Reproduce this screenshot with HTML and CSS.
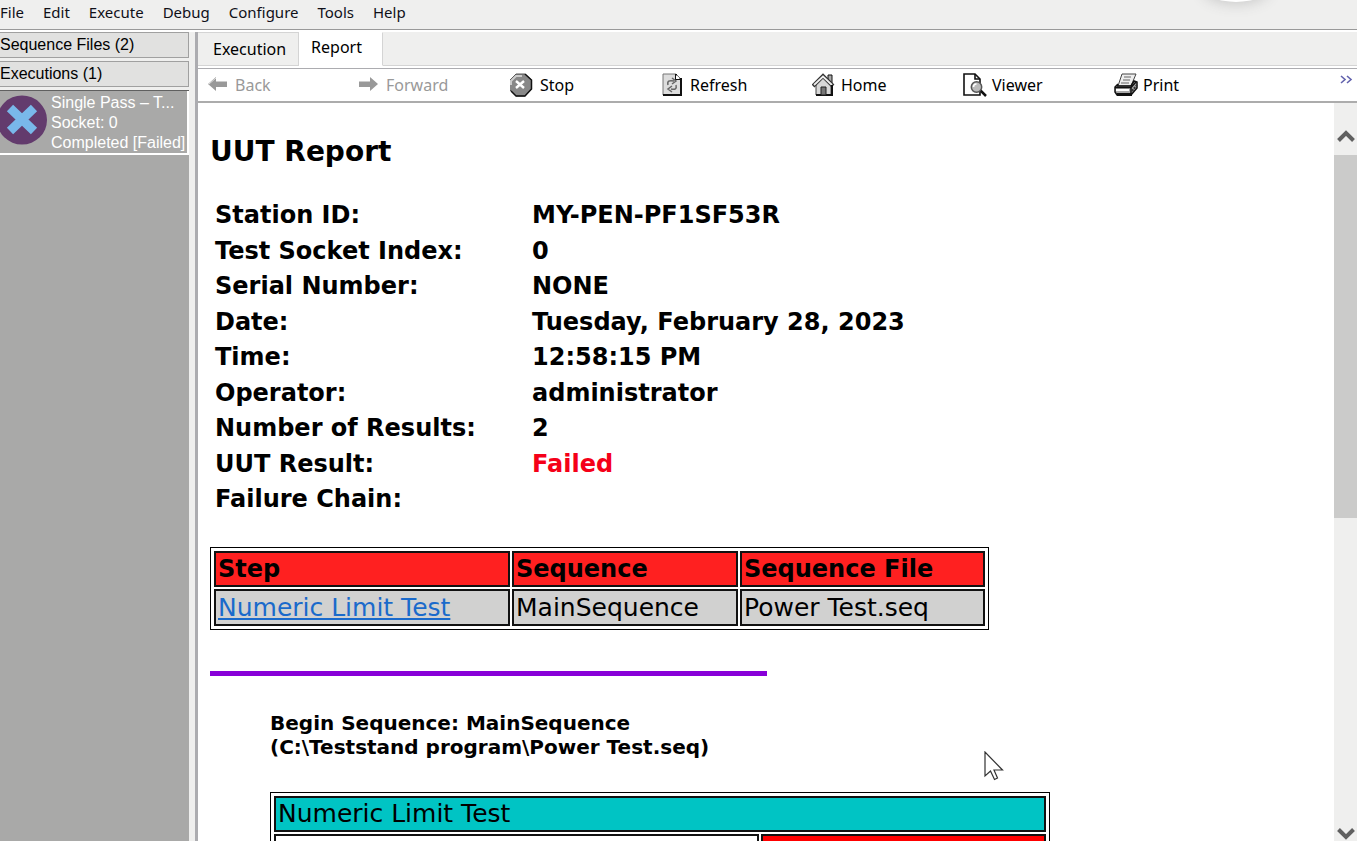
FILE: index.html
```html
<!DOCTYPE html>
<html lang="en">
<head>
<meta charset="utf-8">
<title>UUT Report</title>
<link rel="stylesheet" href="styles.css">
</head>
<body>
<div class="app">
  <header class="menubar">
    <button>File</button><button>Edit</button><button>Execute</button><button>Debug</button><button>Configure</button><button>Tools</button><button>Help</button>
    <span class="bubble"></span>
  </header>
  <div class="workspace">
    <aside class="sidebar">
      <button class="pane-title">Sequence Files (2)</button>
      <button class="pane-title">Executions (1)</button>
      <div class="runs">
        <button class="run">
          <svg width="47" height="50" viewBox="0 0 47 50"><ellipse cx="22" cy="25" rx="25" ry="24.500" fill="#633b6d"/><path d="M10 13 L34 36 M34 13 L10 36" stroke="#79b8ea" stroke-width="9"/></svg>
          <span class="run-text"><span>Single Pass – T...</span><span>Socket: 0</span><span>Completed [Failed]</span></span>
        </button>
      </div>
    </aside>
    <main class="main">
      <nav class="tabs">
        <button class="tab">Execution</button>
        <button class="tab active">Report</button>
        <span class="tab-rest"></span>
      </nav>
      <div class="toolbar">
        <button class="tool" disabled><svg width="22" height="24" viewBox="0 0 22 24"><path d="M0 11 L8 4 V8.500 H19 V14 H8 V18 Z" fill="#999"/><path d="M1 11 L8 5" stroke="#ddd"/></svg>Back</button>
        <button class="tool" disabled><svg width="22" height="24" viewBox="0 0 22 24"><path d="M19 11 L11 4 V8.500 H0 V14 H11 V18 Z" fill="#999"/></svg>Forward</button>
        <button class="tool"><svg width="25" height="24" viewBox="2 0 25 24"><path d="M8 1 H17 L23.500 7 V16 L17 23 H8 L1 16 V8 Z" fill="#888" stroke="#555"/><path d="M17 1 L23.500 7 V16 L17 23 H8 L3 18" fill="none" stroke="#111" stroke-width="1.500"/><path d="M3 12 V8 L8 3 H14" fill="none" stroke="#ccc" stroke-width="2"/><path d="M8 8 L16 15 M16 8 L8 15" stroke="#fff" stroke-width="2.400"/></svg>Stop</button>
        <button class="tool"><svg width="24" height="24" viewBox="0 0 24 24"><path d="M2 1 H15 L20 6 V22 H2 Z" fill="#ddd" stroke="#777"/><path d="M15 1 V6 H20 V22 H2" fill="none" stroke="#111" stroke-width="2"/><path d="M15 2 V6 H19 Z" fill="#fff"/><path d="M7 12 C6 8 8 7 13 8 M11 5 L15 8 L11 11 M15 12 C16 16 14 17 10 16 M11 13 L7 16 L11 19" fill="none" stroke="#666" stroke-width="1.500"/></svg>Refresh</button>
        <button class="tool"><svg width="24" height="24" viewBox="0 0 24 24"><path d="M4 12 L12 4 L19 12 V22 H4 Z" fill="#d8d8d8" stroke="#444"/><path d="M16 2 H20 V10 L16 6 Z" fill="#aaa" stroke="#111"/><path d="M1 13 L11 3 L21 13" fill="none" stroke="#333" stroke-width="4"/><path d="M2 12 L11 3.500 L20 12" fill="none" stroke="#eee" stroke-width="1.800"/><path d="M4 22 H20 V12" fill="none" stroke="#111" stroke-width="2"/><path d="M9 14 H14 V22 H9 Z" fill="#777" stroke="#222"/></svg>Home</button>
        <button class="tool"><svg width="24" height="24" viewBox="2 0 24 24"><path d="M3 1 H14 L19 6 V22 H3 Z" fill="#fff" stroke="#111" stroke-width="1.600"/><path d="M14 1 V6 H19" fill="none" stroke="#111" stroke-width="1.600"/><path d="M18 16 L25 23" stroke="#111" stroke-width="2.500"/><circle cx="15.500" cy="14" r="5.200" fill="#bbb" stroke="#555" stroke-width="1.500"/><path d="M12.500 14 Q12.500 11 15.500 11" fill="none" stroke="#fff" stroke-width="1.500"/></svg>Viewer</button>
        <button class="tool"><svg width="24" height="24" viewBox="1 0 24 24"><path d="M9 1 H23 L18 13 H5 Z" fill="#eee" stroke="#444"/><path d="M11 4 H18 M10 7 H17 M8 10 H16" stroke="#666"/><path d="M5 11 L2 14 V19 L4 22 H18 L24 15 V9 L21 8 L18 13 H4" fill="#aaa" stroke="#111" stroke-width="1.500"/><path d="M2 14.500 H18 L23 9 M18 15 V21" fill="none" stroke="#111" stroke-width="1.500"/><path d="M3 17 H16" stroke="#fff" stroke-width="2"/><path d="M4 21.500 H19" stroke="#111" stroke-width="3"/><path d="M19 18 L24 12" stroke="#333" stroke-width="2" stroke-dasharray="2 1"/></svg>Print</button>
        <button class="more" aria-label="More tools"><svg width="13" height="9" viewBox="0 0 13 9"><path d="M1 1 L5 4.500 L1 8 M7 1 L11 4.500 L7 8" fill="none" stroke="#6262ad" stroke-width="1.600"/></svg></button>
      </div>
      <div class="view">
        <article class="report">
          <h1>UUT Report</h1>
          <table class="facts">
            <tr><th>Station ID:</th><td>MY-PEN-PF1SF53R</td></tr>
            <tr><th>Test Socket Index:</th><td>0</td></tr>
            <tr><th>Serial Number:</th><td>NONE</td></tr>
            <tr><th>Date:</th><td>Tuesday, February 28, 2023</td></tr>
            <tr><th>Time:</th><td>12:58:15 PM</td></tr>
            <tr><th>Operator:</th><td>administrator</td></tr>
            <tr><th>Number of Results:</th><td>2</td></tr>
            <tr><th>UUT Result:</th><td class="failed">Failed</td></tr>
            <tr><th>Failure Chain:</th><td></td></tr>
          </table>
          <table class="grid chain">
            <tr><th class="col-step">Step</th><th class="col-seq">Sequence</th><th class="col-file">Sequence File</th></tr>
            <tr><td><a href="#numeric">Numeric Limit Test</a></td><td>MainSequence</td><td>Power Test.seq</td></tr>
          </table>
          <hr class="rule">
          <section class="sequence">
            <h2>Begin Sequence: MainSequence<br>(C:\Teststand program\Power Test.seq)</h2>
            <table class="grid steps" id="numeric">
              <tr><td class="step-name" colspan="2">Numeric Limit Test</td></tr>
              <tr><td class="step-label"></td><td class="step-status"></td></tr>
            </table>
          </section>
        </article>
        <div class="scrollbar">
          <button aria-label="Scroll up"><svg width="18" height="14" viewBox="0 0 18 14"><path d="M1.500 11.500 L9 4 L16.500 11.500" fill="none" stroke="#606060" stroke-width="4"/></svg></button>
          <div class="track"><div class="thumb"></div></div>
          <button aria-label="Scroll down"><svg width="18" height="14" viewBox="0 0 18 14"><path d="M1.500 2.500 L9 10 L16.500 2.500" fill="none" stroke="#606060" stroke-width="4"/></svg></button>
        </div>
      </div>
    </main>
  </div>
  <svg class="pointer" width="20" height="30" viewBox="0 0 20 30"><path d="M1 1 V25 L6.500 20 L10.500 28.500 L13.500 27 L10 19 H18.500 Z" fill="#fff" stroke="#333" stroke-width="1.200"/></svg>
</div>
</body>
</html>
```
FILE: styles.css
```css
* { box-sizing: border-box; }

body {
  margin: 0;
  background: #efefee;
  color: #000;
  font-family: "Noto Sans", "Open Sans", sans-serif;
  font-size: 16px;
}

button {
  margin: 0;
  padding: 0;
  border: 0;
  background: none;
  color: inherit;
  font: inherit;
  text-align: left;
}

svg { display: block; flex: none; }

.app {
  position: relative;
  display: flex;
  flex-direction: column;
  height: 100vh;
  overflow: hidden;
}

/* Menu bar */
.menubar {
  position: relative;
  flex: none;
  display: flex;
  gap: 19px;
  height: 30px;
  padding-bottom: 6px;
  border-bottom: 1px solid #999;
  color: #101018;
  font-size: 15px;
}
.bubble {
  position: absolute;
  top: -28px;
  right: 88px;
  width: 66px;
  height: 30px;
  border-radius: 50%;
  background: #fff;
  box-shadow: 0 2px 14px #c8c8c8;
}

.workspace {
  flex: 1;
  display: flex;
  min-height: 0;
  border-top: 2px solid #fff;
}

/* Sidebar */
.sidebar {
  flex: none;
  display: flex;
  flex-direction: column;
  gap: 3px;
  width: 190px;
  padding-right: 1px;
  font-family: "Liberation Sans", Arial, sans-serif;
}
.pane-title {
  height: 26px;
  border: 1px solid #a0a0a0;
  border-left: 0;
  background: #e1e1e0;
}
.runs {
  flex: 1;
  border-top: 1px solid #606060;
  background: #a9a9a8;
}
.run {
  display: flex;
  gap: 4px;
  width: 100%;
  height: 64px;
  padding-top: 4px;
  border: solid #fff;
  border-width: 0 2px 2px 0;
  color: #fff;
}
.run-text {
  display: flex;
  flex-direction: column;
  line-height: 20px;
  margin-top: -2px;
  white-space: nowrap;
}

/* Main pane */
.main {
  flex: 1;
  display: flex;
  flex-direction: column;
  min-width: 0;
  margin-left: 5px;
  border-left: 3px solid #acacb0;
  background: #fff;
}
.tabs {
  flex: none;
  display: flex;
  height: 36px;
}
.tab {
  height: 34px;
  padding: 0 12px 0 15px;
  border: 1px solid #d4d4d4;
  border-left: 0;
  background: #efefee;
}
.tab.active {
  padding: 0 20px 5px 12px;
  border-color: #fff #d4d4d4 #fff #fff;
  background: #fff;
}
.tab-rest {
  flex: 1;
  height: 34px;
  border-bottom: 1px solid #d4d4d4;
  background: #efefee;
}
.toolbar {
  flex: none;
  display: grid;
  grid-template-columns: repeat(7, 151px) 1fr;
  height: 35px;
  padding-left: 10px;
  border-top: 1px solid #acacb0;
  border-bottom: 2px solid #acacac;
}
.tool {
  display: flex;
  align-items: center;
  gap: 5px;
}
.tool:disabled { color: #999; }
.more {
  justify-self: end;
  align-self: start;
  padding: 6px 4px 0 0;
}

.view {
  flex: 1;
  display: flex;
  min-height: 0;
}

/* Report document */
.report {
  flex: 1;
  min-width: 0;
  overflow: hidden;
  padding: 31px 12px 0;
  font-family: Verdana, "DejaVu Sans", sans-serif;
  font-size: 24px;
  line-height: 32px;
}
h1 {
  margin: 0 0 27px;
  font-size: 28px;
  line-height: 36px;
}
.facts {
  border-collapse: collapse;
  font-weight: bold;
}
.facts th,
.facts td {
  height: 35px;
  padding: 0 5px;
  text-align: left;
}
.facts tr:nth-child(odd) > * { height: 36px; }
.facts th { width: 317px; }
.facts .failed { color: #f50018; }

.grid {
  padding: 1px;
  border: 1px solid #000;
  border-spacing: 2px;
}
.grid th,
.grid td {
  height: 36px;
  padding: 0 2px;
  border: 2px solid #111;
  text-align: left;
}
.grid td { font-size: 25px; }
.chain { margin-top: 30px; }
.chain th { background: #ff2020; }
.chain td { height: 37px; background: #d1d1d0; }
.col-step { width: 296px; }
.col-seq { width: 226px; }
.col-file { width: 245px; }
.chain a { color: #1a6acb; }

.rule {
  width: 557px;
  height: 5px;
  margin: 41px 0 35px;
  border: 0;
  background: #8800d8;
}
.sequence { padding-left: 60px; }
h2 {
  margin: 0 0 33px;
  font-size: 20px;
  line-height: 24px;
}
.step-name { background: #00c4c4; }
.grid .step-label { width: 485px; }
.grid .step-status { width: 285px; background: #f00; }

/* Scrollbar */
.scrollbar {
  flex: none;
  display: flex;
  flex-direction: column;
  width: 23px;
  background: #efefee;
}
.scrollbar button {
  display: flex;
  justify-content: center;
}
.scrollbar button:first-child { padding: 26px 0 12px; }
.track { flex: 1; }
.thumb {
  height: 54%;
  background: #cbcbca;
}

.pointer {
  position: absolute;
  left: 984px;
  top: 751px;
}
```
